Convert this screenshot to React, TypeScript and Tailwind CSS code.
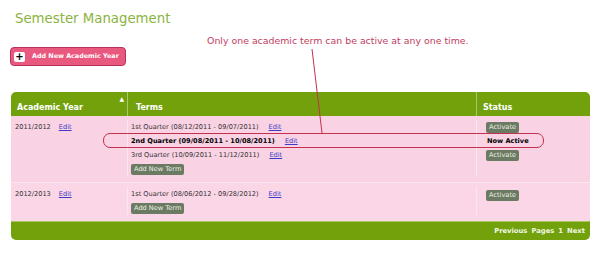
import React from 'react';

const Edit = () => (
  <a href="#" className="text-[#3b3bc4] underline">
    Edit
  </a>
);

const SmallButton = ({ label }: { label: string }) => (
  <span className="inline-flex h-[11px] items-center rounded-[2px] bg-[#6b7a62] px-[3px] leading-none text-[#eef3e6]">
    {label}
  </span>
);

const App = () => {
  return (
    <div className="relative h-[263px] w-[600px] overflow-hidden bg-white font-['DejaVu_Sans',sans-serif]">
      <h1 className="pl-[15px] pt-[10px] text-[13.3px] leading-[18px] text-[#8ab43e]">
        Semester Management
      </h1>

      <div className="ml-[10px] mt-[19px]">
        <button className="flex h-[19px] w-[116px] items-center gap-[7px] rounded-[4px] border border-[#b8335a] bg-[#e9587f] pl-[3px] text-[6.4px] font-bold text-white">
          <span className="flex h-[10px] w-[11px] items-center justify-center rounded-[2px] bg-white text-[10px] leading-none text-black">
            +
          </span>
          Add New Academic Year
        </button>
      </div>

      {/* table */}
      <div className="mx-[11px] mt-[26px] w-[579px] text-[6.6px] text-[#333]">
        <div className="grid h-[24px] grid-cols-[116px_349px_114px] rounded-t-[5px] bg-[#72a10c] text-[8px] font-bold text-white">
          <div className="relative flex items-end pb-[3px] pl-[6px] leading-[10px]">
            Academic Year
            <span className="absolute right-[3px] top-[4px] text-[6px] leading-none">▲</span>
          </div>
          <div className="flex items-end border-l border-[#a8c96a] pb-[3px] pl-[8px] leading-[10px]">Terms</div>
          <div className="flex items-end border-l border-[#a8c96a] pb-[3px] pl-[6px] leading-[10px]">Status</div>
        </div>

        <div className="grid grid-cols-[116px_349px_114px] border-b border-[#fbe8ef] bg-[#f9d2e3] pb-[6px] pt-[4px] leading-[14px]">
          <div className="flex h-[14px] items-center gap-[8px] pl-[4px]">
            <span>2011/2012</span>
            <Edit />
          </div>
          <div className="flex flex-col border-l border-[#fbe8ef] pl-[3px]">
            <div className="flex h-[14px] items-center gap-[10px]">
              <span>1st Quarter (08/12/2011 - 09/07/2011)</span>
              <Edit />
            </div>
            <div className="flex h-[14px] items-center gap-[10px]">
              <span className="font-bold text-black">2nd Quarter (09/08/2011 - 10/08/2011)</span>
              <Edit />
            </div>
            <div className="flex h-[14px] items-center gap-[10px]">
              <span>3rd Quarter (10/09/2011 - 11/12/2011)</span>
              <Edit />
            </div>
            <div className="flex h-[14px] items-center">
              <SmallButton label="Add New Term" />
            </div>
          </div>
          <div className="flex flex-col border-l border-[#fbe8ef] pl-[9px]">
            <div className="flex h-[14px] items-center">
              <SmallButton label="Activate" />
            </div>
            <div className="flex h-[14px] items-center pl-[1px] font-bold text-black">Now Active</div>
            <div className="flex h-[14px] items-center">
              <SmallButton label="Activate" />
            </div>
          </div>
        </div>

        <div className="grid grid-cols-[116px_349px_114px] bg-[#fad6e6] pb-[6px] pt-[4px] leading-[14px]">
          <div className="flex h-[14px] items-center gap-[8px] pl-[4px]">
            <span>2012/2013</span>
            <Edit />
          </div>
          <div className="flex flex-col border-l border-[#fbe8ef] pl-[3px]">
            <div className="flex h-[14px] items-center gap-[10px]">
              <span>1st Quarter (08/06/2012 - 09/28/2012)</span>
              <Edit />
            </div>
            <div className="flex h-[14px] items-center">
              <SmallButton label="Add New Term" />
            </div>
          </div>
          <div className="flex flex-col border-l border-[#fbe8ef] pl-[9px]">
            <div className="flex h-[14px] items-center pt-[2px]">
              <SmallButton label="Activate" />
            </div>
          </div>
        </div>

        <div className="flex h-[19px] items-center justify-end gap-[4px] rounded-b-[5px] border-t border-[#a6c85a] bg-[#72a10c] pr-[5px] text-[6.8px] font-bold text-[#f1f7e4]">
          <span>Previous</span>
          <span>Pages</span>
          <span>1</span>
          <span>Next</span>
        </div>
      </div>

      {/* annotation overlay */}
      <div className="absolute left-[207px] top-[35px] text-[9.4px] leading-[12px] text-[#c23c5e]">
        Only one academic term can be active at any one time.
      </div>
      <svg className="absolute left-0 top-0" width="600" height="263">
        <line x1="312" y1="49" x2="322" y2="133" stroke="#c4304f" strokeWidth="1" />
      </svg>
      <div className="absolute left-[103px] top-[133px] h-[15px] w-[441px] rounded-[7px] border border-[#c4304f]" />
    </div>
  );
};

export default App;
